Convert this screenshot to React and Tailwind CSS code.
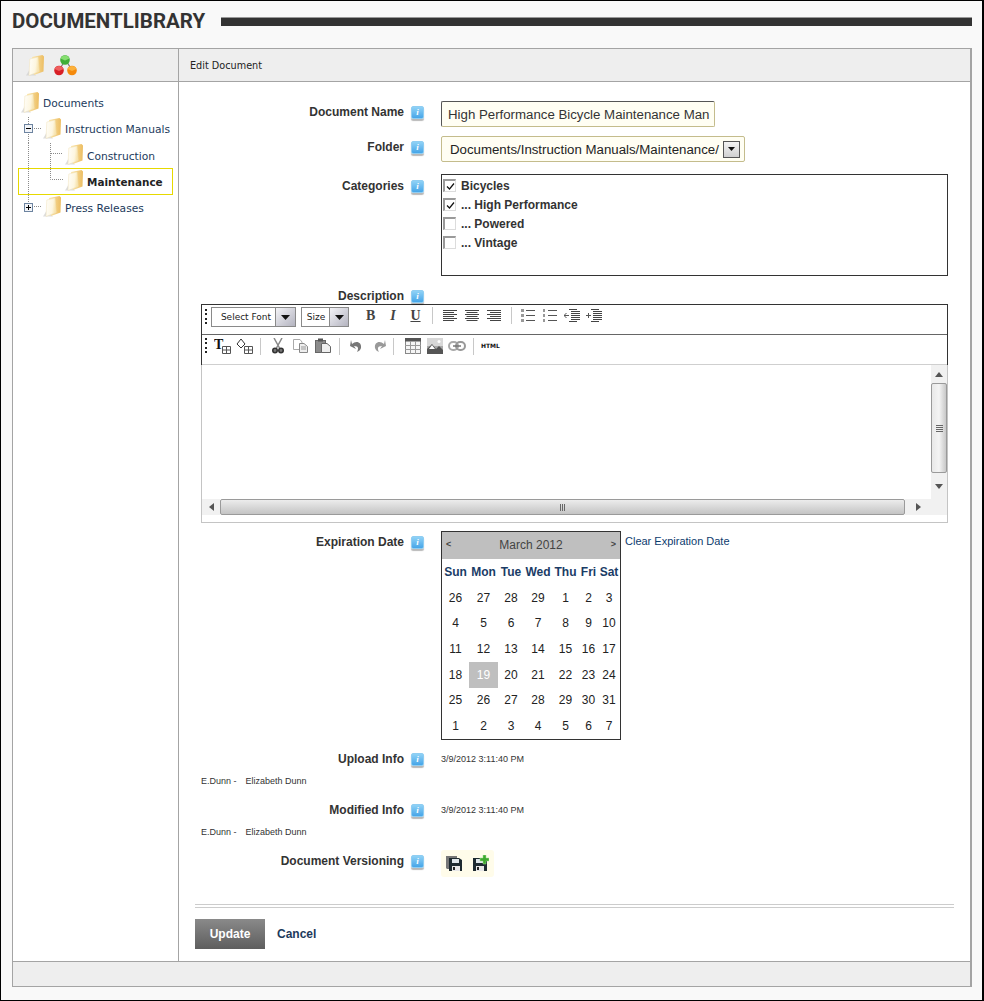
import React, { useId } from "react";

const sans = "font-['Liberation_Sans',Arial,sans-serif]";
const verd = "font-['DejaVu_Sans',Verdana,sans-serif]";

function Folder({ className = "" }) {
  const a = useId();
  const b = useId();
  return (
    <svg width="18" height="21" viewBox="0 0 18 21" className={"shrink-0 " + className}>
      <defs>
        <linearGradient id={a} x1="0" y1="0" x2="1" y2="0">
          <stop offset="0" stopColor="#fbe7ae" />
          <stop offset="1" stopColor="#ecbd62" />
        </linearGradient>
        <linearGradient id={b} x1="0" y1="0" x2="1" y2="0.2">
          <stop offset="0" stopColor="#fffefa" />
          <stop offset="0.7" stopColor="#fdf6e0" />
          <stop offset="1" stopColor="#f8e3ac" />
        </linearGradient>
      </defs>
      <path d="M0 20.5 L4 14 L10 20.5 Z" fill="#cfcfcf" opacity="0.7" />
      <path d="M6 2 L16.5 0 L18 1.5 L17.5 16.5 L8 20 Z" fill={`url(#${a})`} />
      <path d="M3.8 4 L12 2 L13.2 16.5 L3 20.5 Z" fill={`url(#${b})`} stroke="#f1e2ba" strokeWidth="0.5" />
    </svg>
  );
}

function Molecule() {
  return (
    <svg width="23" height="21" viewBox="0 0 23 21" className="shrink-0">
      <path d="M11.5 5 L5 15 M11.5 5 L18 15" stroke="#777" strokeWidth="1.2" />
      <circle cx="11" cy="5" r="4.8" fill="#3fae38" />
      <path d="M6.6 3.5 A4.8 4.8 0 0 1 15.4 3.5 L11 5.5 Z" fill="#86de70" />
      <circle cx="5" cy="15.5" r="4.8" fill="#d81f26" />
      <path d="M0.6 14 A4.8 4.8 0 0 1 9.4 14 L5 16 Z" fill="#ee5f5f" />
      <circle cx="18" cy="15.5" r="4.8" fill="#f58a0c" />
      <path d="M13.6 14 A4.8 4.8 0 0 1 22.4 14 L18 16 Z" fill="#fbb13c" />
    </svg>
  );
}

function Info() {
  return (
    <div className="flex h-[13px] w-[13px] shrink-0 items-center justify-center rounded-[2px] border border-[#8fcdf2] bg-linear-to-b from-[#8fd2f6] to-[#45a5e8] font-['Liberation_Serif',serif] text-[9px] font-bold italic leading-none text-white shadow-[0_2px_1px_rgba(0,0,0,0.28)]">
      i
    </div>
  );
}

function Expander({ plus }) {
  return (
    <div className="flex h-[9px] w-[9px] items-center justify-center border border-[#6d84a0] bg-[#f2f4f8]">
      <svg width="7" height="7" viewBox="0 0 7 7">
        <path d="M1 3.5 H6" stroke="#000" />
        {plus && <path d="M3.5 1 V6" stroke="#000" />}
      </svg>
    </div>
  );
}

function Tree() {
  const dot = { stroke: "#8a8a8a", strokeDasharray: "1 1", fill: "none" };
  const txt = "ml-1 leading-[16px] text-[10.7px] text-[#1c3a5c] " + verd;
  return (
    <div className="ml-[5px] mt-[9px] w-[155px] whitespace-nowrap">
      <div className="flex h-[26px] items-start pl-[3px]">
        <Folder className="mt-px" />
        <span className={txt + " mt-[5px]"}>Documents</span>
      </div>
      <div className="flex h-[26px] items-start pl-[3px]">
        <div className="relative h-[26px] w-[22px] shrink-0">
          <svg width="22" height="26" className="block"><path d="M7.5 0 V7 M7.5 15 V26 M13 11.5 H20" {...dot} /></svg>
          <div className="absolute left-[3px] top-[7px]"><Expander /></div>
        </div>
        <Folder className="mt-px" />
        <span className={txt + " mt-[5px]"}>Instruction Manuals</span>
      </div>
      <div className="flex h-[25px] items-start pl-[3px]">
        <svg width="44" height="25" className="shrink-0"><path d="M7.5 0 V25 M29.5 0 V25 M30 10.5 H42" {...dot} /></svg>
        <Folder className="mt-px" />
        <span className={txt + " mt-[6px]"}>Construction</span>
      </div>
      <div className="flex h-[27px] items-start border border-[#e6d900] pl-[2px]">
        <svg width="44" height="25" className="shrink-0"><path d="M7.5 0 V25 M29.5 0 V10.5 H42" {...dot} /></svg>
        <Folder className="mt-px" />
        <span className={"ml-1 mt-[5px] text-[10.45px] font-bold leading-[16px] text-[#222] " + verd}>Maintenance</span>
      </div>
      <div className="flex h-[26px] items-start pl-[3px]">
        <div className="relative h-[26px] w-[22px] shrink-0">
          <svg width="22" height="26" className="block"><path d="M7.5 0 V8 M13 11.5 H20" {...dot} /></svg>
          <div className="absolute left-[3px] top-[8px]"><Expander plus /></div>
        </div>
        <Folder className="mt-px" />
        <span className={txt + " mt-[6px]"}>Press Releases</span>
      </div>
    </div>
  );
}

function Label({ children, top = 3 }) {
  return (
    <div
      className={
        "flex h-[16px] w-[229px] shrink-0 items-center justify-end gap-[7px] self-start text-[12px] font-bold leading-[16px] text-[#333] " +
        (top === 0 ? "mt-0" : top === 4 ? "mt-[4px]" : "mt-[3px]")
      }
    >
      <span className="whitespace-nowrap">{children}</span>
      <Info />
    </div>
  );
}

function Check({ on }) {
  return (
    <div className="flex h-[13px] w-[13px] shrink-0 items-center justify-center border-t-2 border-l-2 border-r border-b border-t-[#9a9a9a] border-l-[#9a9a9a] border-r-[#dcdcdc] border-b-[#dcdcdc] bg-white">
      {on && (
        <svg width="9" height="9" viewBox="0 0 9 9">
          <path d="M1 4.5 L3.5 7 L8 1.5" stroke="#111" strokeWidth="1.2" fill="none" />
        </svg>
      )}
    </div>
  );
}

function Grip() {
  return (
    <div className="flex h-[15px] w-[3px] shrink-0 flex-col justify-between">
      <i className="h-[2px] w-[2px] bg-[#222]" />
      <i className="h-[2px] w-[2px] bg-[#222]" />
      <i className="h-[2px] w-[2px] bg-[#222]" />
      <i className="h-[2px] w-[2px] bg-[#222]" />
    </div>
  );
}

function Sep({ className = "" }) {
  return <div className={"h-[17px] w-px shrink-0 bg-[#c8c8c8] " + className} />;
}

function Drop({ label, total, btn, pad }) {
  return (
    <div className={"flex h-[20px] shrink-0 items-stretch border border-[#8a8a8a] bg-white " + total}>
      <span className={"flex flex-1 items-center justify-center pt-px text-[9px] text-[#222] " + pad + " " + verd}>{label}</span>
      <span className={"flex items-center justify-center border-l border-[#8a8a8a] bg-linear-to-br from-[#f4f4f8] to-[#b4b4c0] " + btn}>
        <svg width="9" height="5" viewBox="0 0 9 5"><path d="M0 0 H9 L4.5 5 Z" fill="#111" /></svg>
      </span>
    </div>
  );
}

function Lines({ type }) {
  const ys = [1, 3, 5, 7, 9, 11];
  const len = (i) => (i % 2 === 0 ? 14 : 11);
  return (
    <svg width="14" height="12" viewBox="0 0 14 12" className="shrink-0">
      {ys.map((y, i) => {
        const l = len(i);
        const x = type === "l" ? 0 : type === "c" ? (14 - l) / 2 : 14 - l;
        return <path key={y} d={`M${x} ${y + 0.5} H${x + l}`} stroke="#444" />;
      })}
    </svg>
  );
}

function ListIcon({ numbered }) {
  return (
    <svg width="14" height="13" viewBox="0 0 14 13" className="shrink-0">
      {[1.5, 6.5, 11.5].map((y) => (
        <React.Fragment key={y}>
          <rect x="0" y={y - 1.5} width={numbered ? 2 : 3} height="3" fill="#999" />
          <path d={`M5 ${y} H14`} stroke="#555" />
        </React.Fragment>
      ))}
    </svg>
  );
}

function Indent({ out }) {
  return (
    <svg width="17" height="15" viewBox="0 0 17 15" className="shrink-0">
      {out ? <path d="M0 7.5 H5 M2.5 5 V10" stroke="#555" /> : <path d="M0 7.5 H5 M2.5 5 L0 7.5 L2.5 10" stroke="#555" fill="none" />}
      {[1, 3, 5, 7, 9, 11, 13].map((y, i) => (
        <path key={y} d={`M${i === 0 || i === 6 ? 5 : 7} ${y + 0.5} H${i === 0 || i === 6 ? 13 : 16}`} stroke="#444" />
      ))}
    </svg>
  );
}

function Toolbar1() {
  return (
    <div className="flex h-[30px] items-start border-b border-[#666] pl-[3px] pt-[2px]">
      <div className="mt-[2px]"><Grip /></div>
      <Drop label="Select Font" total="ml-[3px] w-[85px]" btn="w-[20px]" pad="pl-[5px]" />
      <Drop label="Size" total="ml-[5px] w-[48px]" btn="w-[19px]" pad="pl-px" />
      <span className="ml-[17px] mt-px w-[10px] font-['Liberation_Serif',serif] text-[14px] font-bold leading-[16px] text-[#444]">B</span>
      <span className="ml-[12px] mt-px w-[10px] text-center font-['Liberation_Serif',serif] text-[14px] font-bold italic leading-[16px] text-[#444]">I</span>
      <span className="ml-[12px] mt-px w-[11px] text-center font-['Liberation_Serif',serif] text-[14px] font-bold leading-[16px] text-[#444] underline">U</span>
      <Sep className="ml-[11px]" />
      <span className="ml-[10px] mt-[2px] flex gap-2">
        <Lines type="l" />
        <Lines type="c" />
        <Lines type="r" />
      </span>
      <Sep className="ml-[10px]" />
      <span className="ml-[9px] mt-[2px] flex gap-2">
        <ListIcon />
        <ListIcon numbered />
      </span>
      <span className="ml-[7px] mt-px flex gap-[5px]">
        <Indent />
        <Indent out />
      </span>
    </div>
  );
}

function Toolbar2() {
  return (
    <div className="flex h-[30px] items-start border-b border-[#cfcfcf] pl-[3px] pt-[3px]">
      <Grip />
      <svg width="17" height="16" viewBox="0 0 17 16" className="ml-[6px] shrink-0">
        <text x="0" y="11" fontSize="14" fontWeight="bold" fontFamily="Liberation Serif" fill="#111">T</text>
        <path d="M8.5 8.5 H16.5 V15.5 H8.5 Z M8.5 12 H16.5 M12.5 8.5 V15.5" stroke="#555" fill="none" />
      </svg>
      <svg width="17" height="16" viewBox="0 0 17 16" className="ml-[5px] shrink-0">
        <path d="M5 1 L1 6 L5 10 L9 6 Z" stroke="#333" fill="#fff" />
        <path d="M8.5 8.5 H16.5 V15.5 H8.5 Z M8.5 12 H16.5 M12.5 8.5 V15.5" stroke="#555" fill="#fff" />
      </svg>
      <Sep className="ml-[7px]" />
      <svg width="12" height="16" viewBox="0 0 12 16" className="ml-[11px] shrink-0">
        <path d="M2 0 L7.5 10 M10 0 L4.5 10" stroke="#888" strokeWidth="1.5" />
        <circle cx="3" cy="12.5" r="2.2" fill="#777" stroke="#333" strokeWidth="1.6" />
        <circle cx="9" cy="12.5" r="2.2" fill="#777" stroke="#333" strokeWidth="1.6" />
      </svg>
      <svg width="15" height="14" viewBox="0 0 15 14" className="ml-[9px] mt-px shrink-0">
        <path d="M0.5 0.5 H7 L9 3 V10.5 H0.5 Z" fill="#fff" stroke="#aaa" />
        <path d="M6.5 4.5 H11 L14.5 7.5 V13.5 H6.5 Z" fill="#eee" stroke="#888" />
        <path d="M8 8 H13 M8 10 H13" stroke="#999" />
      </svg>
      <svg width="16" height="15" viewBox="0 0 16 15" className="ml-[7px] shrink-0">
        <rect x="0.5" y="2.5" width="10" height="12" fill="#8b8b8b" stroke="#666" />
        <rect x="3" y="0.5" width="5" height="3" fill="#555" />
        <path d="M6.5 5.5 H12 L15.5 8.5 V14.5 H6.5 Z" fill="#eee" stroke="#666" />
      </svg>
      <Sep className="ml-[8px]" />
      <svg width="13" height="14" viewBox="0 0 13 14" className="ml-[10px] mt-px shrink-0">
        <path d="M2 5 C6 1 12 3 11 9 C10.5 11 9 12 7 13 C8.5 10 9 7 4 7 L6 10 L0 7 L1 1 Z" fill="#777" />
      </svg>
      <svg width="13" height="14" viewBox="0 0 13 14" className="ml-[10px] mt-px shrink-0">
        <path d="M11 5 C7 1 1 3 2 9 C2.5 11 4 12 6 13 C4.5 10 4 7 9 7 L7 10 L13 7 L12 1 Z" fill="#999" />
      </svg>
      <Sep className="ml-[7px]" />
      <svg width="16" height="16" viewBox="0 0 16 16" className="ml-[11px] shrink-0">
        <rect x="0.5" y="0.5" width="15" height="15" fill="#f5f5f5" stroke="#888" />
        <rect x="0" y="0" width="16" height="3.5" fill="#555" />
        <path d="M0 7.5 H16 M0 11.5 H16 M5.5 3 V16 M10.5 3 V16" stroke="#999" />
      </svg>
      <svg width="16" height="16" viewBox="0 0 16 16" className="ml-[6px] shrink-0">
        <rect x="0" y="0" width="16" height="16" fill="#aaa" />
        <path d="M0 0 H16 V8 H0 Z" fill="#d8d8d8" />
        <path d="M0 16 V11 L5 6 L9 11 L12 8 L16 12 V16 Z" fill="#555" />
        <path d="M2 11 L5 7 L8 11 Z" fill="#fff" />
        <circle cx="12" cy="3.5" r="1.5" fill="#fff" />
      </svg>
      <svg width="18" height="10" viewBox="0 0 18 10" className="ml-[5px] mt-[3px] shrink-0">
        <rect x="1" y="1" width="9" height="8" rx="4" fill="none" stroke="#aaa" strokeWidth="2" />
        <rect x="8" y="1" width="9" height="8" rx="4" fill="none" stroke="#999" strokeWidth="2" />
        <path d="M5 5 H13" stroke="#777" strokeWidth="1.5" />
      </svg>
      <Sep className="ml-[7px]" />
      <span className={"ml-[7px] mt-[3px] text-[6px] font-bold leading-[10px] text-[#111] " + verd}>HTML</span>
    </div>
  );
}

function Arrow({ dir }) {
  const p = { u: "M0 5 L4 0 L8 5 Z", d: "M0 0 H8 L4 5 Z", l: "M5 0 V8 L0 4 Z", r: "M0 0 V8 L5 4 Z" }[dir];
  const v = dir === "u" || dir === "d";
  return (
    <svg width={v ? 8 : 5} height={v ? 5 : 8} viewBox={v ? "0 0 8 5" : "0 0 5 8"}>
      <path d={p} fill="#555" />
    </svg>
  );
}

function EditorBody() {
  return (
    <div className="flex h-[158px] flex-col border-x border-b border-[#c4c4c4]">
      <div className="flex h-[134px]">
        <div className="flex-1 bg-white" />
        <div className="flex w-[16px] flex-col items-stretch bg-[#f1f1f1]">
          <div className="flex h-[18px] items-center justify-center"><Arrow dir="u" /></div>
          <div className="flex h-[90px] flex-col items-center justify-center gap-px rounded-[2px] border border-[#9a9a9a] bg-linear-to-r from-[#e8e8e8] via-[#f4f4f4] to-[#c8c8c8]">
            <i className="h-px w-[7px] bg-[#666]" />
            <i className="h-px w-[7px] bg-[#666]" />
            <i className="h-px w-[7px] bg-[#666]" />
            <i className="h-px w-[7px] bg-[#666]" />
          </div>
          <div className="flex flex-1 items-center justify-center"><Arrow dir="d" /></div>
        </div>
      </div>
      <div className="flex h-[16px] items-stretch">
        <div className="flex w-[18px] items-center justify-center bg-[#f1f1f1]"><Arrow dir="l" /></div>
        <div className="flex w-[685px] items-center justify-center gap-px rounded-[2px] border border-[#9a9a9a] bg-linear-to-b from-[#ececec] to-[#c4c4c4]">
          <i className="h-[7px] w-px bg-[#666]" />
          <i className="h-[7px] w-px bg-[#666]" />
          <i className="h-[7px] w-px bg-[#666]" />
        </div>
        <div className="flex w-[26px] items-center justify-center bg-[#f1f1f1]"><Arrow dir="r" /></div>
        <div className="flex-1 bg-[#f1f1f1]" />
      </div>
      <div className="flex-1 bg-white" />
    </div>
  );
}

const DAYS = ["Sun", "Mon", "Tue", "Wed", "Thu", "Fri", "Sat"];
const WEEKS = [
  [26, 27, 28, 29, 1, 2, 3],
  [4, 5, 6, 7, 8, 9, 10],
  [11, 12, 13, 14, 15, 16, 17],
  [18, 19, 20, 21, 22, 23, 24],
  [25, 26, 27, 28, 29, 30, 31],
  [1, 2, 3, 4, 5, 6, 7],
];

function Calendar() {
  return (
    <div className="h-[209px] w-[180px] shrink-0 border border-[#333] bg-white">
      <div className="flex h-[27px] items-center justify-between bg-[#bfbfbf] px-[4px] pb-[2px] text-[12px] text-[#444]">
        <span className="text-[9px] font-bold">&lt;</span>
        <span>March 2012</span>
        <span className="text-[9px] font-bold">&gt;</span>
      </div>
      <div className="grid h-[180px] grid-cols-[27px_29px_26px_28px_27px_19px_22px] grid-rows-7 text-center text-[12px] text-[#222]">
        {DAYS.map((d) => (
          <div key={d} className="flex items-center justify-center whitespace-nowrap font-bold text-[#1a3c66]">{d}</div>
        ))}
        {WEEKS.flat().map((d, i) => (
          <div key={i} className={"flex items-center justify-center " + (i === 22 ? "bg-[#bfbfbf] text-white" : "")}>
            {d}
          </div>
        ))}
      </div>
    </div>
  );
}

function Floppy({ plus }) {
  return (
    <svg width="17" height="17" viewBox="0 0 17 17" className="shrink-0">
      {!plus && <path d="M0 1 H11 V3 H3 V14 H1 L0 13 Z" fill="#777" />}
      <path d={plus ? "M1 3 H11 L15 3 V16 H1 Z" : "M3 3 H13 L16 5 V16 H3 Z"} fill="#1e2a30" />
      <rect x={plus ? 4 : 6} y="4" width="7" height="4" fill="#dfe6ea" />
      <rect x={plus ? 4 : 6} y="11" width="8" height="5" fill="#e8e8e8" />
      <rect x={plus ? 5 : 7} y="12" width="2" height="3" fill="#222" />
      {plus && <path d="M11 0 H14 V3 H17 V6 H14 V9 H11 V6 H8 V3 H11 Z" fill="#3ea82f" stroke="#9ee08f" strokeWidth="0.5" />}
    </svg>
  );
}

function Who() {
  return (
    <div className="ml-[6px] mt-[6px] h-[16px] whitespace-nowrap text-[9px] leading-[16px] text-[#333]">
      E.Dunn -<span className="ml-[9px]">Elizabeth Dunn</span>
    </div>
  );
}

export default function App() {
  return (
    <div className={"flex h-[1001px] w-[984px] flex-col border-y border-l border-r-2 border-black bg-[#f9f9f9] " + sans}>
      <div className="flex h-[47px] shrink-0 items-start pl-[11px] pt-[7px]">
        <h1 className="w-[193px] whitespace-nowrap font-['Roboto',sans-serif] text-[20.5px] font-bold leading-[26px] text-[#333]">DOCUMENTLIBRARY</h1>
        <div className="ml-[16px] mt-[9px] h-[9px] w-[751px] border-t border-[#999] bg-[#333]" />
      </div>

      <div className="ml-[11px] flex h-[939px] w-[960px] flex-col border border-r-2 border-[#a4a4a4] bg-white">
        <div className="flex h-[33px] shrink-0 border-b border-[#a4a4a4] bg-[#eeeeee]">
          <div className="flex w-[166px] shrink-0 items-center border-r border-[#a4a4a4] pl-[13px]">
            <Folder />
            <div className="ml-[10px]"><Molecule /></div>
          </div>
          <div className={"flex items-center pl-[11px] pt-[2px] text-[9.7px] text-[#222] " + verd}>Edit Document</div>
        </div>

        <div className="flex min-h-0 flex-1">
          <div className="w-[166px] shrink-0 border-r border-[#a4a4a4]">
            <Tree />
          </div>

          <div className="flex-1 pl-[16px]">
            <div className="mt-[19px] flex">
              <Label>Document Name</Label>
              <div className="ml-[17px] flex h-[26px] w-[274px] items-center overflow-hidden whitespace-nowrap rounded-[2px] border border-t-[#555] border-l-[#555] border-r-[#c4bc8c] border-b-[#c4bc8c] bg-[#fffef3] pl-[6px] pt-[2px] text-[13.25px] text-[#333]">
                High Performance Bicycle Maintenance Man
              </div>
            </div>

            <div className="mt-[9px] flex">
              <Label>Folder</Label>
              <div className="ml-[17px] flex h-[26px] w-[304px] items-center rounded-[2px] border border-[#c4bc8c] bg-[#fffef3] pl-[8px] text-[13.25px] text-[#222]">
                <span className="mt-[2px] w-[269px] whitespace-nowrap">Documents/Instruction Manuals/Maintenance/</span>
                <span className="ml-[4px] flex h-[17px] w-[17px] shrink-0 items-center justify-center border border-[#555] bg-linear-to-b from-[#f4f4f4] to-[#d0d0d0]">
                  <svg width="7" height="4" viewBox="0 0 7 4"><path d="M0 0 H7 L3.5 4 Z" fill="#111" /></svg>
                </span>
              </div>
            </div>

            <div className="mt-[12px] flex">
              <Label top={4}>Categories</Label>
              <div className="ml-[17px] h-[102px] w-[507px] border border-[#333] pt-px text-[12px] font-bold text-[#333]">
                {[["Bicycles", true], ["... High Performance", true], ["... Powered", false], ["... Vintage", false]].map(([t, on]) => (
                  <div key={t} className="flex h-[19px] items-center gap-[5px] pl-px">
                    <Check on={on} />
                    <span>{t}</span>
                  </div>
                ))}
              </div>
            </div>

            <div className="mt-[12px] flex">
              <Label top={0}>Description</Label>
            </div>

            <div className="ml-[6px] w-[747px]">
              <div className="border-x border-t border-[#333]">
                <Toolbar1 />
                <Toolbar2 />
              </div>
              <EditorBody />
            </div>

            <div className="mt-[8px] flex">
              <Label>Expiration Date</Label>
              <div className="ml-[17px] flex items-start">
                <Calendar />
                <a className="ml-[4px] mt-[3px] whitespace-nowrap text-[11px] leading-[14px] text-[#0d3c6e]">Clear Expiration Date</a>
              </div>
            </div>

            <div className="mt-[11px] flex">
              <Label top={0}>Upload Info</Label>
              <div className="ml-[17px] text-[9px] leading-[16px] text-[#333]">3/9/2012 3:11:40 PM</div>
            </div>
            <Who />

            <div className="mt-[13px] flex">
              <Label top={0}>Modified Info</Label>
              <div className="ml-[17px] text-[9px] leading-[16px] text-[#333]">3/9/2012 3:11:40 PM</div>
            </div>
            <Who />

            <div className="mt-[10px] flex">
              <Label>Document Versioning</Label>
              <div className="ml-[17px] flex h-[27px] items-center gap-[9px] rounded-[3px] bg-[#fffcea] px-[5px]">
                <Floppy />
                <Floppy plus />
              </div>
            </div>

            <div className="mt-[27px] h-[4px] w-[759px] border-y border-[#cccccc]" />

            <div className="mt-[11px] flex items-center">
              <button className="h-[30px] w-[70px] bg-linear-to-b from-[#8a8a8a] to-[#5e5e5e] text-[12px] font-bold text-white">Update</button>
              <a className="ml-[12px] text-[12px] font-bold text-[#1c3a5c]">Cancel</a>
            </div>
          </div>
        </div>

        <div className="h-[25px] shrink-0 border-t border-[#a4a4a4] bg-[#eeeeee]" />
      </div>
    </div>
  );
}
